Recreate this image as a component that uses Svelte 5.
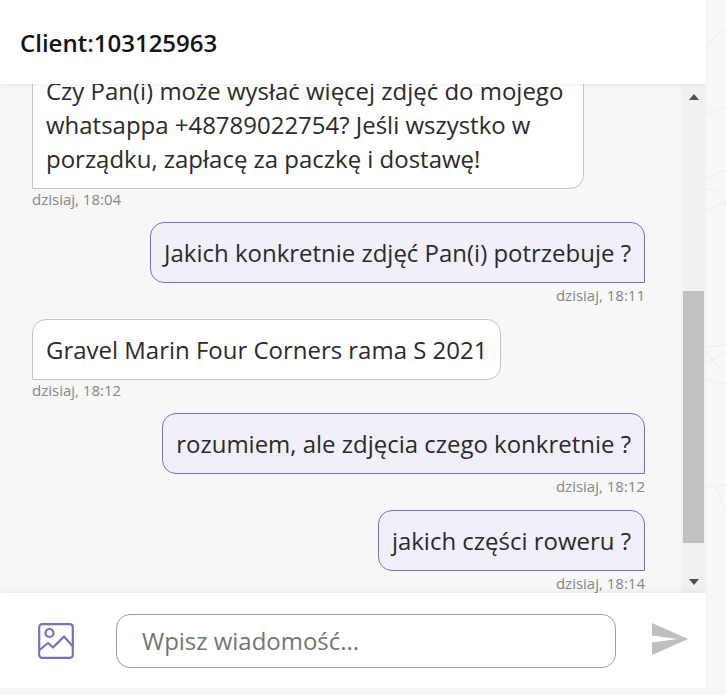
<script>
	const messages = [
		{ mine: false, lines: 'Czy Pan(i) może wysłać więcej zdjęć do mojego whatsappa +48789022754? Jeśli wszystko w porządku, zapłacę za paczkę i dostawę!', time: 'dzisiaj, 18:04' },
		{ mine: true, lines: 'Jakich konkretnie zdjęć Pan(i) potrzebuje ?', time: 'dzisiaj, 18:11' },
		{ mine: false, lines: 'Gravel Marin Four Corners rama S 2021', time: 'dzisiaj, 18:12' },
		{ mine: true, lines: 'rozumiem, ale zdjęcia czego konkretnie ?', time: 'dzisiaj, 18:12' },
		{ mine: true, lines: 'jakich części roweru ?', time: 'dzisiaj, 18:14' }
	];
</script>

<div class="page">
	<svg class="backdrop" viewBox="0 0 726 695" aria-hidden="true">
		<path d="M706 46 Q716 36 726 28" />
		<path d="M706 113 L726 108" />
		<path d="M706 178 L726 170" />
		<path d="M706 190 Q720 186 726 206" />
		<path d="M706 210 L726 202" />
		<path d="M706 347 L726 345 M706 362 L726 352 M706 352 L726 376 M706 380 L726 384" />
		<path d="M706 487 L726 485 M716 487 L724 510" />
	</svg>
	<main class="chat">
		<header class="head">Client:103125963</header>

		<div class="body">
			<div class="list">
				{#each messages as m}
					<div class="msg" class:mine={m.mine}>
						<div class="bubble">{m.lines}</div>
						<div class="time">{m.time}</div>
					</div>
				{/each}
			</div>
			<div class="scrollbar">
				<span class="arrow up"></span>
				<div class="track"><div class="thumb"></div></div>
				<span class="arrow down"></span>
			</div>
		</div>

		<footer class="foot">
			<svg class="pic" viewBox="0 0 36 36" width="36" height="36" fill="none" stroke="#7b6fc4" stroke-width="2.2" stroke-linejoin="round" stroke-linecap="round">
				<rect x="1.2" y="1.2" width="33.6" height="33.6" rx="3" />
				<circle cx="11.5" cy="10" r="4" />
				<path d="M1.5 27 L10 20 L15 24.5 L26 13.5 L34.5 23" />
			</svg>
			<div class="field">Wpisz wiadomość...</div>
			<svg class="send" viewBox="0 0 36 32" width="36" height="32">
				<path d="M0 0 L36 16 L0 32 L0 19.6 L25.7 16 L0 12.4 Z" fill="#bfbfbf" />
			</svg>
		</footer>
	</main>
</div>

<style>
	:global(body) {
		margin: 0;
	}
	.page {
		position: relative;
		width: 726px;
		height: 695px;
		overflow: hidden;
		background: #f8f8f8;
		font-family: 'Open Sans', sans-serif;
	}
	.backdrop {
		position: absolute;
		inset: 0;
		width: 726px;
		height: 695px;
		fill: none;
		stroke: #f1f1f1;
		stroke-width: 1.5;
	}
	.chat {
		position: relative;
		width: 706px;
		height: 688px;
		display: flex;
		flex-direction: column;
		background: #f7f7f7;
	}
	.head {
		height: 84px;
		flex: none;
		display: flex;
		align-items: center;
		padding-left: 20px;
		background: #fff;
		color: #141414;
		font-size: 24px;
		font-weight: 600;
		box-shadow: 0 2px 5px rgba(0, 0, 0, 0.05);
		position: relative;
		z-index: 1;
	}
	.body {
		flex: 1;
		min-height: 0;
		display: flex;
	}
	.list {
		flex: 1;
		min-width: 0;
		display: flex;
		flex-direction: column;
		justify-content: flex-end;
		gap: 12px;
		padding: 0 36px 0 32px;
		overflow: hidden;
	}
	.msg {
		display: flex;
		flex-direction: column;
		align-items: flex-start;
		flex: none;
		padding-bottom: 1px;
	}
	.msg:last-child {
		margin-bottom: -2px;
	}
	.msg.mine {
		align-items: flex-end;
		gap: 2px;
		padding-bottom: 2px;
	}
	.bubble {
		box-sizing: border-box;
		max-width: 552px;
		padding: 13px 13px 12px;
		background: #fff;
		border: 1px solid #c4c4c4;
		border-radius: 14px 14px 14px 0;
		color: #2b2b2b;
		font-size: 23.98px;
		line-height: 34px;
	}
	.mine .bubble {
		background: #f1eff9;
		border-color: #7b6fc4;
		border-radius: 14px 14px 0 14px;
	}
	.time {
		color: #888;
		font-size: 15px;
		line-height: 20px;
	}
	.scrollbar {
		width: 25px;
		flex: none;
		display: flex;
		flex-direction: column;
		align-items: center;
		background: #f1f1f1;
	}
	.arrow {
		flex: none;
		width: 0;
		height: 0;
		border-left: 5.5px solid transparent;
		border-right: 5.5px solid transparent;
	}
	.arrow.up {
		margin-top: 10px;
		border-bottom: 6px solid #505050;
	}
	.arrow.down {
		margin: 6px 0 8px;
		border-top: 6px solid #505050;
	}
	.track {
		flex: 1;
		width: 21px;
		display: flex;
		flex-direction: column;
		justify-content: flex-end;
		padding-bottom: 30px;
	}
	.thumb {
		height: 252px;
		background: #c1c1c1;
	}
	.foot {
		height: 95px;
		flex: none;
		display: flex;
		align-items: center;
		background: #fff;
		box-shadow: 0 -2px 5px rgba(0, 0, 0, 0.05);
		position: relative;
	}
	.pic {
		margin-left: 38px;
		flex: none;
	}
	.field {
		box-sizing: border-box;
		width: 500px;
		height: 54px;
		margin-left: 42px;
		padding-left: 25px;
		display: flex;
		align-items: center;
		border: 1px solid #a0a0a0;
		border-radius: 14px;
		color: #757575;
		font-size: 23.98px;
	}
	.send {
		margin: -4px 0 0 36px;
		flex: none;
	}
</style>
